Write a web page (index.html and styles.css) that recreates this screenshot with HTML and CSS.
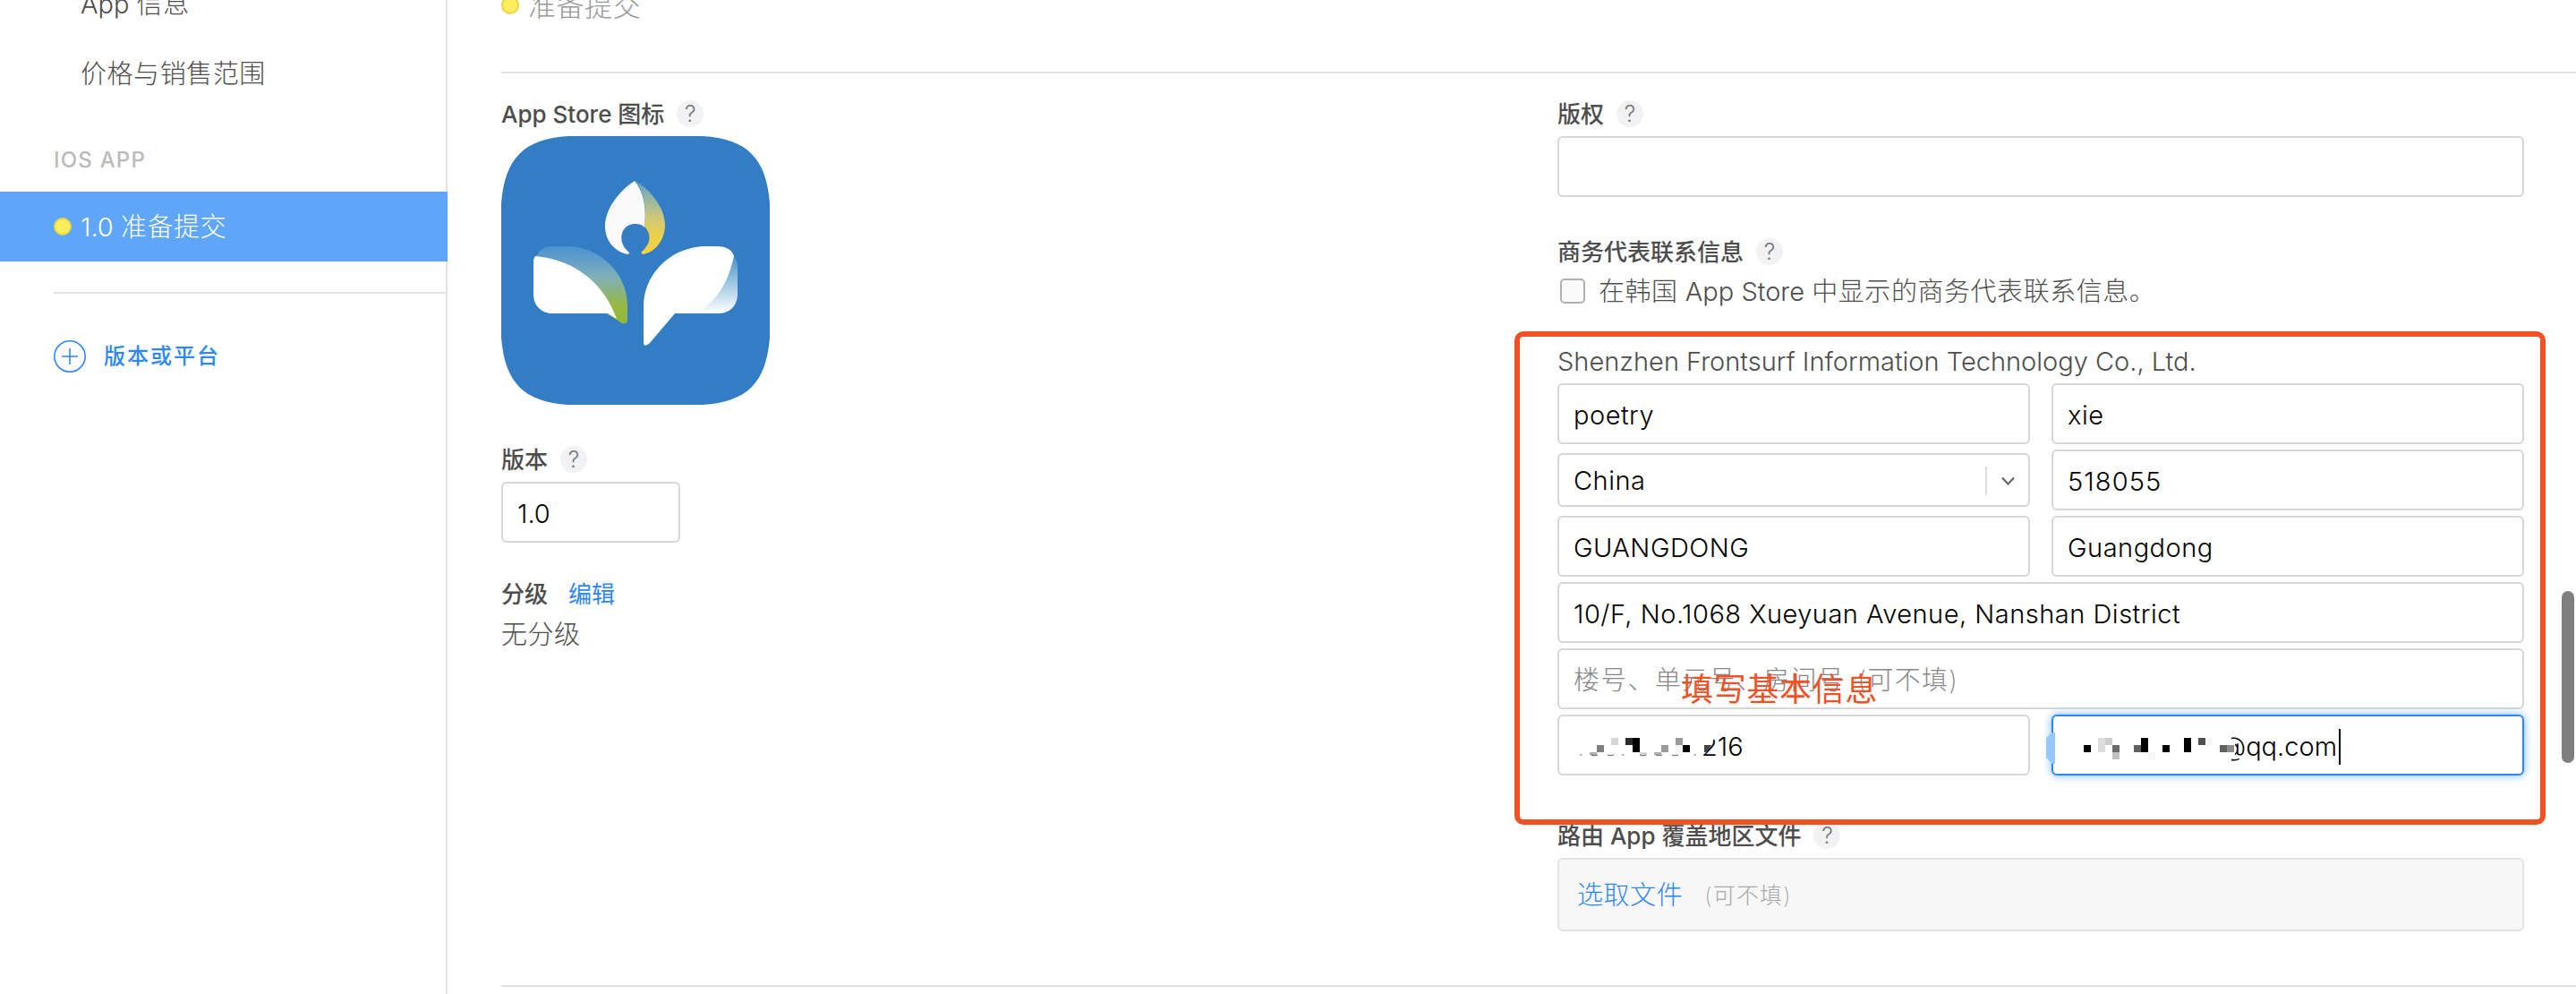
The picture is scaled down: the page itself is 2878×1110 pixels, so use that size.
FILE: index.html
```html
<!DOCTYPE html>
<html lang="zh-CN">
<head>
<meta charset="utf-8">
<title>App Store Connect</title>
<link rel="stylesheet" href="styles.css">
</head>
<body>
<div class="app">
  <nav class="sidebar">
    <a class="nav-item first"><span>App <b class="thin">信息</b></span></a>
    <a class="nav-item"><span class="thin">价格与销售范围</span></a>
    <h2 class="nav-heading"><span>IOS APP</span></h2>
    <a class="nav-item active"><i class="dot"></i><span>1.0 <b class="thin">准备提交</b></span></a>
    <hr class="nav-rule">
    <a class="nav-add">
      <svg class="plus" viewBox="0 0 36 36"><circle cx="18" cy="18" r="17.2"/><path d="M18 9v18M9 18h18"/></svg>
      <span>版本或平台</span>
    </a>
  </nav>
  <main class="main">
    <header class="status"><i class="dot"></i><span class="thin">准备提交</span></header>
    <section class="columns">
      <div class="left">
        <div class="label"><span>App Store 图标</span><i class="help">?</i></div>
        <svg class="app-icon" viewBox="0 0 300 300">
          <defs>
            <linearGradient id="flame" x1="0" y1="0" x2="0" y2="1"><stop offset="0" stop-color="#5ea3cb"/><stop offset=".5" stop-color="#cfc87a"/><stop offset=".75" stop-color="#ecd04a"/><stop offset="1" stop-color="#f4d145"/></linearGradient>
            <linearGradient id="leaf" x1="0" y1="0" x2="0" y2="1"><stop offset="0" stop-color="#4a92d2"/><stop offset=".4" stop-color="#80afb8"/><stop offset=".78" stop-color="#97b940"/><stop offset="1" stop-color="#93b83c"/></linearGradient>
            <linearGradient id="page" x1="0" y1="0" x2="0" y2="1"><stop offset="0" stop-color="#4a92cb"/><stop offset=".5" stop-color="#a3cae5"/><stop offset="1" stop-color="#fff"/></linearGradient>
          </defs>
          <path fill="#327dc4" d="M75 0C25 3 4 25 0 75V225C4 275 25 297 75 300H225C275 297 296 275 300 225V75C296 25 275 3 225 0Z"/>
          <path fill="#f9f9f9" d="M149 50C132 61 116 81 116 101C116 117 127 129 141 132C143 132 144 130 142 129C129 118 133 98 150 98Q157 98 160 102C162 84 161 65 149 50Z"/>
          <path fill="url(#flame)" d="M150 50C168 61 183 81 183 99C183 115 173 129 159 132C156 132 156 129 158 128C166 121 169 110 160 101C162 83 161 66 150 50Z"/>
          <path fill="url(#leaf)" d="M39 134C44 125 50 123 58 123H73C110 123 141 153 141 190V206Q140 210 135 209L119 199Z"/>
          <path fill="#fff" d="M39 134C84 139 115 165 129 204L119 198H57C45 198 36 189 36 177V142Q36 134 39 134Z"/>
          <path fill="url(#page)" d="M260 134C264 140 264 144 264 149V176C264 190 255 198 242 198H219Z"/>
          <path fill="#fff" d="M230 123H241C252 123 258 127 260 134C254 161 244 181 219 198H194L166 231Q159 237 159 230V191C159 153 190 123 230 123Z"/>
        </svg>
        <div class="label version"><span>版本</span><i class="help">?</i></div>
        <div class="field short"><span>1.0</span></div>
        <div class="label rating"><span>分级</span><a class="edit">编辑</a></div>
        <p class="none thin">无分级</p>
      </div>
      <div class="right">
        <div class="label"><span>版权</span><i class="help">?</i></div>
        <div class="field"></div>
        <div class="label contact"><span>商务代表联系信息</span><i class="help">?</i></div>
        <div class="check-row"><i class="checkbox"></i><span><b class="thin">在韩国</b> App Store <b class="thin">中显示的商务代表联系信息。</b></span></div>
        <div class="form">
          <p class="company">Shenzhen Frontsurf Information Technology Co., Ltd.</p>
          <div class="grid">
            <div class="field"><span>poetry</span></div>
            <div class="field"><span>xie</span></div>
            <div class="field select"><span>China</span><svg class="chev" viewBox="0 0 36 32"><path class="sep" d="M1 0V32"/><path class="arrow" d="M19 12.5l6.5 7 6.5-7"/></svg></div>
            <div class="field zip"><span>518055</span></div>
            <div class="field"><span>GUANGDONG</span></div>
            <div class="field"><span>Guangdong</span></div>
            <div class="field wide"><span>10/F, No.1068 Xueyuan Avenue, Nanshan District</span></div>
            <div class="field wide placeholder"><span class="thin">楼号、单元号、房间号 (可不填)</span></div>
            <div class="field phone"><span>216</span>
              <svg class="mosaic" viewBox="0 0 230 68">
                <path fill="#fff" d="M150 16H177L175 27 165 43.500H150Z"/>
                <path fill="#d6d6d6" d="M60 26h8v8h-8z"/>
                <path fill="#2b2b2b" d="M76 26h8v8h-8z"/>
                <path fill="#000" d="M84 26h8v16h-8zM140 34h8v8h-8z"/>
                <path fill="#7e7e7e" d="M44 34h8v8h-8z"/>
                <path fill="#b0b0b0" d="M36 42h8v3h-8zM108 42h8v3h-8z"/>
                <path fill="#d6d6d6" d="M92 42h8v3h-8z"/>
                <path fill="#999" d="M116 34h8v8h-8zM132 26h8v8h-8z"/>
                <path fill="#f4f4f4" d="M132 34h8v8h-8z"/>
                <path fill="#444" d="M164 34h8l-5 8h-3z"/>
                <path class="ends" d="M25 45h2.500M38 45q3.500 1.500 7 0M56 45q3.500 1.500 7 0M72 45h2.500M92 45q3.500 1.500 7 0M110 45q3.500 1.500 7 0M128 45q3.500 1.500 7 0M152.500 45h2.500"/>
              </svg>
            </div>
            <div class="field mail"><span>@qq.com</span><i class="caret"></i>
              <svg class="mosaic" viewBox="0 0 230 68">
                <path fill="#94c7fa" d="M4 20V55H1L-6 48V26L1 20Z"/>
                <path fill="#fff" d="M180 18h21v10h4v18h-4v12h-21z"/>
                <path fill="#000" d="M36 34h8v8h-8zM100 26h8v16h-8zM124 34h8v8h-8zM148 26h8v16h-8z"/>
                <path fill="#ddd" d="M52 26h8v16h-8z"/>
                <path fill="#ccc" d="M60 26h8v8h-8z"/>
                <path fill="#6b6b6b" d="M68 34h8v8h-8z"/>
                <path fill="#c0c0c0" d="M68 42h8v8h-8z"/>
                <path fill="#606060" d="M92 34h8v8h-8zM188 34h8v8h-8z"/>
                <path fill="#f6f6f6" d="M108 42h8v8h-8zM172 26h8v8h-8z"/>
                <path fill="#505050" d="M164 26h8v8h-8z"/>
                <path fill="#8a8a8a" d="M196 34h8v8h-8z"/>
              </svg>
            </div>
          </div>
          <div class="frame"></div>
          <div class="note">填写基本信息</div>
        </div>
        <div class="label route"><span>路由 App 覆盖地区文件</span><i class="help">?</i></div>
        <div class="file"><a class="thin">选取文件</a><span class="thin">(可不填)</span></div>
      </div>
    </section>
  </main>
  <div class="scrollbar"></div>
</div>
</body>
</html>
```
FILE: styles.css
```css
* { box-sizing: border-box; }
body { margin: 0; background: #fff; color: #4d4d4d; font: 300 29px/40px Inter, "Noto Sans CJK SC", sans-serif; overflow: hidden; }
i { font-style: normal; }
p, h2, hr { margin: 0; border: 0; }
span, a { white-space: nowrap; }
.thin { font-weight: 200; letter-spacing: .55px; }
.app { display: flex; height: 1110px; position: relative; overflow: hidden; }
.sidebar { width: 500px; flex: none; border-right: 2px solid #e3e3e3; }
.nav-item { display: flex; align-items: center; height: 78px; padding: 2px 0 0 90px; }
.first { margin-top: -35px; }
.nav-heading { height: 93px; padding: 38px 0 0 60px; font-size: 24px; line-height: 40px; font-weight: 500; letter-spacing: 1.2px; color: #bbb; }
.active { width: 500px; padding-left: 60px; gap: 10px; background: #5fa6f8; color: #fff; }
.active .dot { margin-top: -2px; }
.dot { width: 20px; height: 20px; flex: none; border-radius: 50%; background: #fdec5b; border: 2px solid #e6d645; }
.nav-rule { height: 2px; margin: 34px 0 52px 60px; background: #e3e3e3; }
.nav-add { display: flex; align-items: center; gap: 20px; padding-left: 60px; height: 36px; color: #2d87f8; font-size: 24px; font-weight: 500; letter-spacing: 2px; }
.plus { width: 36px; height: 36px; fill: none; stroke: #2d87f8; stroke-width: 1.6; }
.main { flex: 1; padding-left: 60px; }
.status { display: flex; align-items: center; gap: 10px; height: 82px; padding-bottom: 68px; border-bottom: 2px solid #e3e3e3; color: #999; font-size: 31px; }
.status span { padding-top: 2px; }
.columns { display: flex; height: 1020px; padding-top: 25px; border-bottom: 2px solid #e3e3e3; }
.left { width: 1180px; }
.right { width: 1080px; }
.label { display: flex; align-items: center; height: 40px; margin-bottom: 5px; font-size: 26px; font-weight: 500; gap: 14px; }
.label span, .edit { padding-top: 1px; }
.help { width: 30px; height: 30px; border-radius: 50%; background: #f2f2f5; color: #777; font-size: 25px; line-height: 30px; text-align: center; font-weight: 300; }
.app-icon { display: block; width: 300px; height: 300px; }
.version { margin-top: 41px; }
.field { position: relative; height: 68px; padding: 4px 16px 0; border: 2px solid #d6d6d6; border-radius: 6px; background: #fff; color: #000; display: flex; align-items: center; letter-spacing: .5px; }
.short { width: 200px; letter-spacing: 0; }
.rating { margin-top: 37px; gap: 23px; }
.edit { color: #2d87f8; font-weight: 400; }
.none { height: 40px; padding-top: 1px; }
.contact { margin-top: 41px; margin-bottom: 4px; }
.check-row { display: flex; align-items: center; height: 40px; padding-left: 3px; gap: 15px; }
.check-row span { padding-top: 1px; }
.checkbox { width: 28px; height: 28px; border: 2px solid #b0b0b0; border-radius: 5px; background: #fafafa; }
.form { position: relative; margin-top: 38px; height: 530px; }
.company { height: 45px; padding-top: 1px; }
.grid { display: grid; grid-template-columns: 528px 528px; column-gap: 24px; row-gap: 6px; }
.select { height: 60px; margin-top: 4px; padding: 1px 12px 0 16px; justify-content: space-between; }
.chev { width: 36px; height: 32px; fill: none; }
.sep { stroke: #dedede; stroke-width: 2; }
.arrow { stroke: #666; stroke-width: 2.2; }
.zip { letter-spacing: 1.1px; }
.wide { grid-column: span 2; }
.placeholder { color: #888; }
.placeholder span { letter-spacing: 1.3px; word-spacing: 5px; }
.phone { padding-left: 159px; letter-spacing: 0; }
.mosaic { position: absolute; left: -2px; top: -2px; width: 230px; height: 68px; overflow: visible; }
.ends { fill: none; stroke: #666; stroke-width: 1.2; }
.mail { padding-left: 187px; letter-spacing: 0; border-color: #2d87f8; box-shadow: 0 0 10px #6db0fb; }
.caret { width: 2px; height: 40px; margin: -1px 0 0 2px; background: #000; }
.frame { position: absolute; left: -48px; top: -13px; width: 1152px; height: 551px; border: 6px solid #f05125; border-radius: 10px; }
.note { position: absolute; left: 138px; top: 362px; color: #f05125; font-size: 36px; line-height: 50px; font-weight: 400; letter-spacing: .7px; white-space: nowrap; }
.route { margin: 0 0 5px; }
.file { height: 82px; display: flex; align-items: center; border: 2px solid #e3e3e3; border-radius: 6px; background: #f7f7f7; padding: 2px 0 0 20px; gap: 24px; }
.file a { color: #2d87f8; }
.file span { color: #a8a8a8; font-size: 25px; letter-spacing: 1.2px; }
.scrollbar { position: absolute; right: 2px; top: 660px; width: 14px; height: 192px; border-radius: 7px; background: #7f7f7f; }
```
